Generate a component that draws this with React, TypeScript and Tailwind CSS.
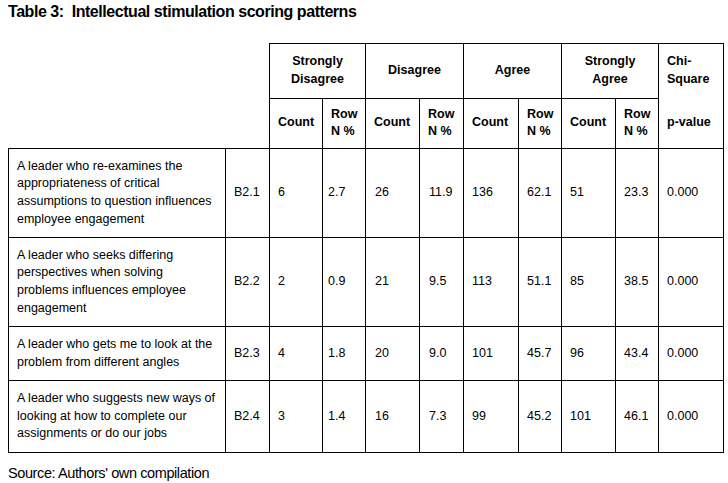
import React from "react";

const colWidths = [217, 44, 53, 43, 54, 44, 55, 43, 54, 43, 65];

interface Row {
  text: React.ReactNode;
  code: string;
  values: string[];
  height: string;
}

const rows: Row[] = [
  {
    text: (
      <>
        A leader who re-examines the
        <br />
        appropriateness of critical
        <br />
        assumptions to question influences
        <br />
        employee engagement
      </>
    ),
    code: "B2.1",
    values: ["6", "2.7", "26", "11.9", "136", "62.1", "51", "23.3", "0.000"],
    height: "h-[89px]",
  },
  {
    text: (
      <>
        A leader who seeks differing
        <br />
        perspectives when solving
        <br />
        problems influences employee
        <br />
        engagement
      </>
    ),
    code: "B2.2",
    values: ["2", "0.9", "21", "9.5", "113", "51.1", "85", "38.5", "0.000"],
    height: "h-[89px]",
  },
  {
    text: (
      <>
        A leader who gets me to look at the
        <br />
        problem from different angles
      </>
    ),
    code: "B2.3",
    values: ["4", "1.8", "20", "9.0", "101", "45.7", "96", "43.4", "0.000"],
    height: "h-[54px]",
  },
  {
    text: (
      <>
        A leader who suggests new ways of
        <br />
        looking at how to complete our
        <br />
        assignments or do our jobs
      </>
    ),
    code: "B2.4",
    values: ["3", "1.4", "16", "7.3", "99", "45.2", "101", "46.1", "0.000"],
    height: "h-[72px]",
  },
];

// left padding of the nine value columns
const valuePad = ["pl-2", "pl-[5px]", "pl-[9px]", "pl-[9px]", "pl-2", "pl-2", "pl-2", "pl-2", "pl-2"];

const cell = "border border-black align-middle";

const App: React.FC = () => {
  return (
    <div className="w-[728px] h-[483px] bg-white text-black px-2 font-['Liberation_Sans',Arial,sans-serif]">
      <div className="h-[43px] pt-[3px] text-[16px] leading-[18px] tracking-[-0.45px] font-bold whitespace-pre">
        {"Table 3:  Intellectual stimulation scoring patterns"}
      </div>

      <table className="table-fixed border-collapse w-[715px] text-[12.5px] leading-[17.7px]">
        <colgroup>
          {colWidths.map((w, i) => (
            <col key={i} style={{ width: w }} />
          ))}
        </colgroup>
        <thead>
          <tr className="h-[54px] font-bold">
            <th colSpan={2} rowSpan={2} className="p-0"></th>
            <th colSpan={2} className={`${cell} font-bold text-center`}>
              Strongly
              <br />
              Disagree
            </th>
            <th colSpan={2} className={`${cell} font-bold text-center`}>
              Disagree
            </th>
            <th colSpan={2} className={`${cell} font-bold text-center`}>
              Agree
            </th>
            <th colSpan={2} className={`${cell} font-bold text-center`}>
              Strongly
              <br />
              Agree
            </th>
            <th rowSpan={2} className={`${cell} p-0 font-bold text-left`}>
              <div className="h-[104px] flex flex-col pl-2">
                <div className="h-[54px] flex items-center">
                  <span>
                    Chi-
                    <br />
                    Square
                  </span>
                </div>
                <div className="flex-1 flex items-center">p-value</div>
              </div>
            </th>
          </tr>
          <tr className="h-[50px]">
            {[0, 1, 2, 3].map((i) => (
              <React.Fragment key={i}>
                <th className={`${cell} font-bold text-left pl-2`}>Count</th>
                <th className={`${cell} font-bold text-left pl-2`}>
                  Row
                  <br />
                  N %
                </th>
              </React.Fragment>
            ))}
          </tr>
        </thead>
        <tbody>
          {rows.map((r) => (
            <tr key={r.code} className={r.height}>
              <td className={`${cell} pl-2 pr-1 text-left`}>{r.text}</td>
              <td className={`${cell} pl-2`}>{r.code}</td>
              {r.values.map((v, i) => (
                <td key={i} className={`${cell} ${valuePad[i]}`}>
                  {v}
                </td>
              ))}
            </tr>
          ))}
        </tbody>
      </table>

      <div className="mt-[12px] text-[14.5px] leading-[16px] tracking-[-0.4px]">Source: Authors' own compilation</div>
    </div>
  );
};

export default App;
